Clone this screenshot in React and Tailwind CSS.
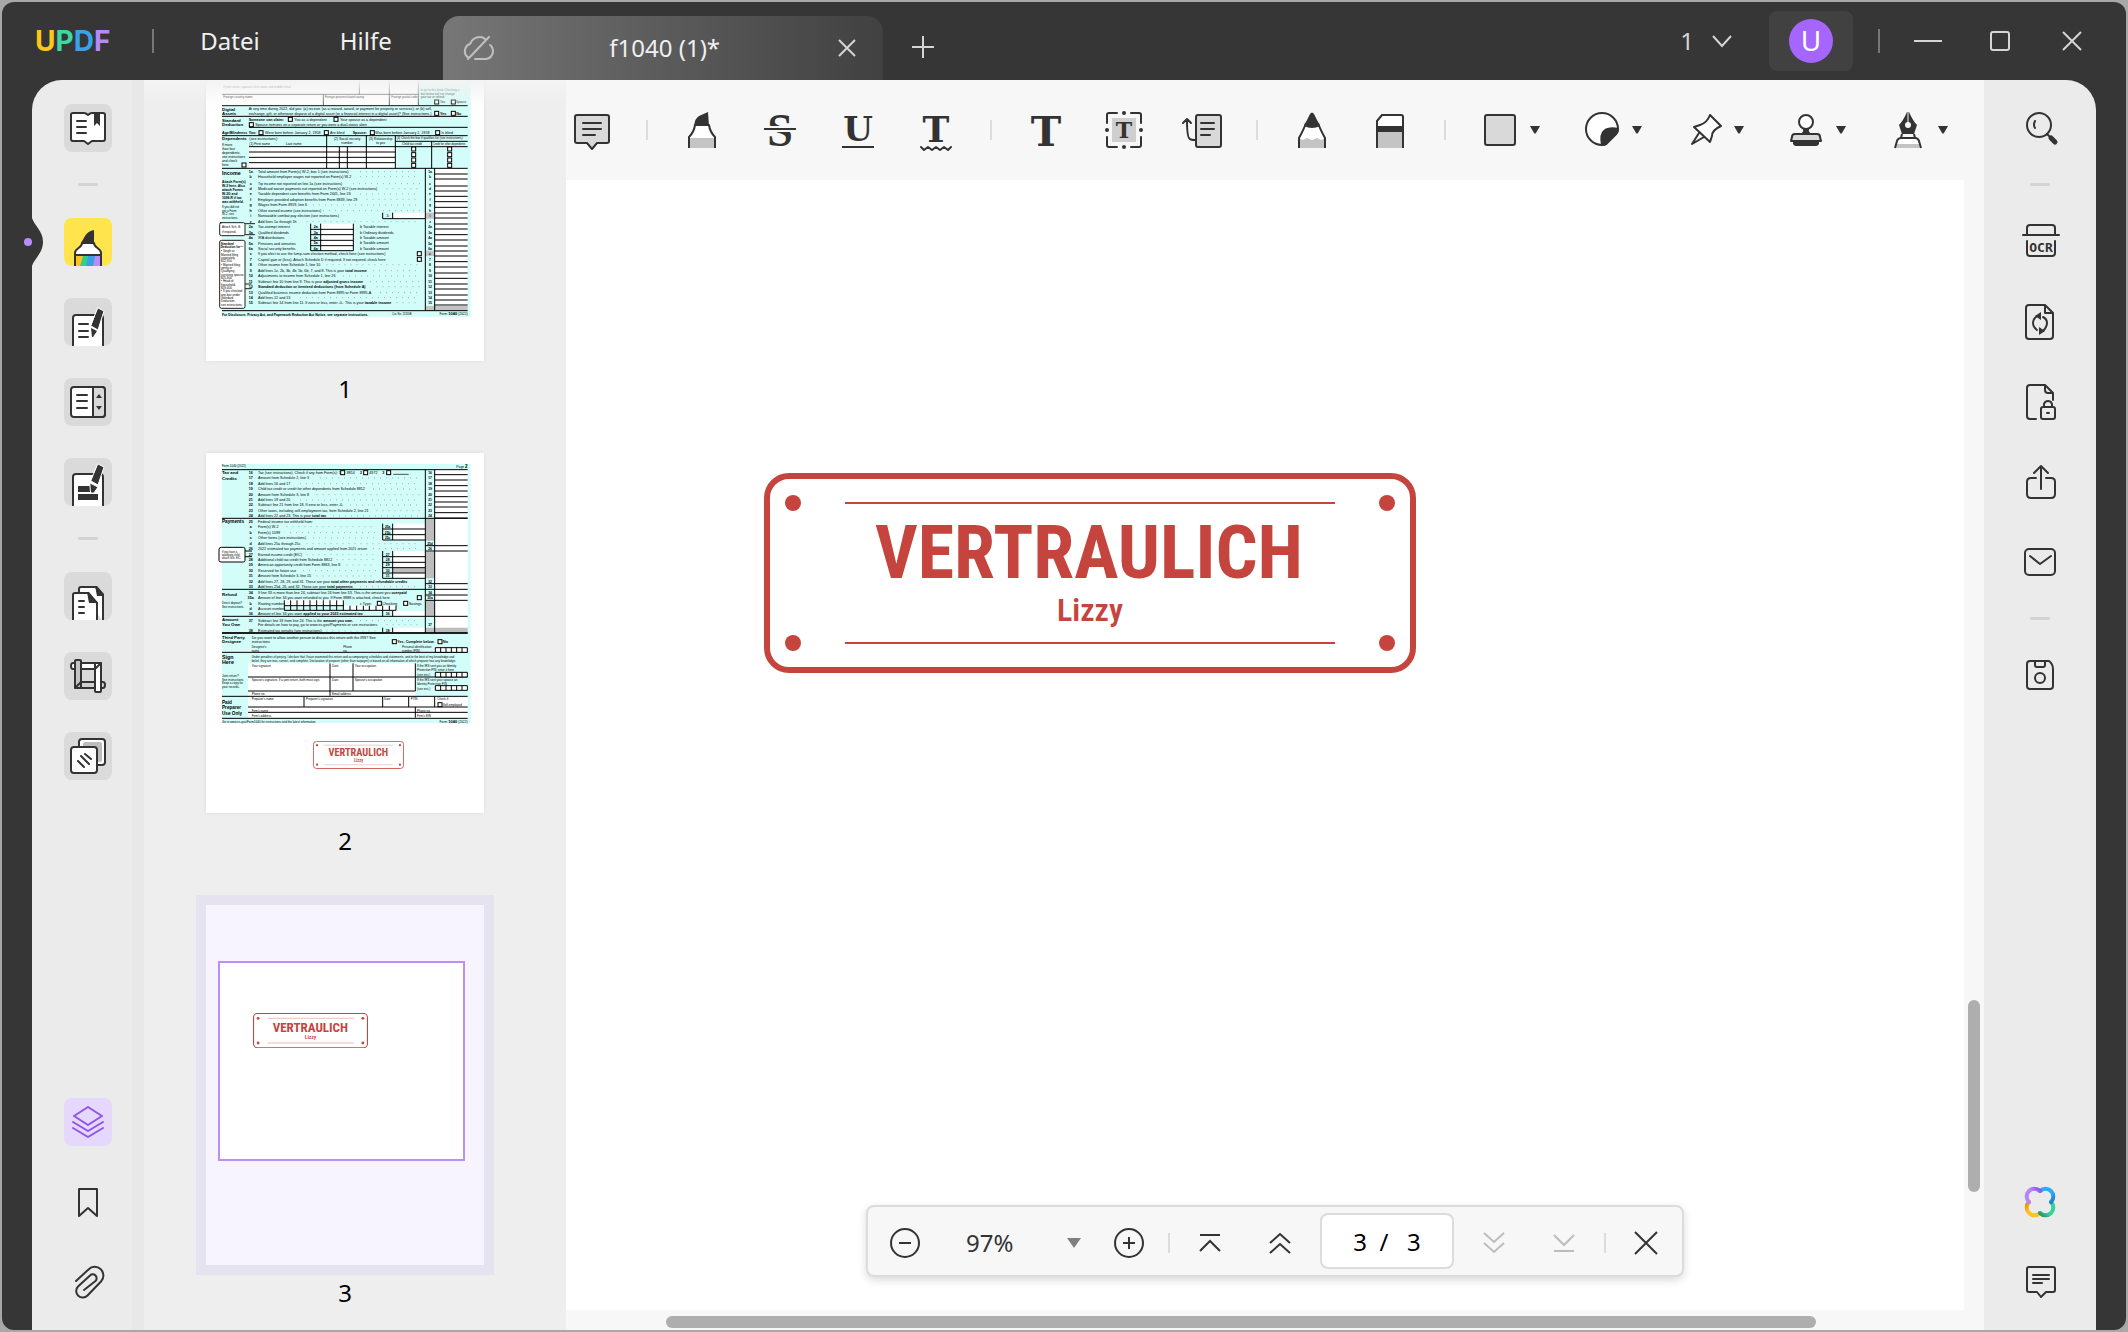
import React from "react";

const K = "#333333";
const RED = "#c5453e";

function Icon({ size = 48, children, stroke = K, width = 2, className = "" }) {
  return (
    <svg
      width={size}
      height={size}
      viewBox={`0 0 ${size} ${size}`}
      fill="none"
      stroke={stroke}
      strokeWidth={width}
      strokeLinecap="round"
      strokeLinejoin="round"
      className={`block shrink-0 overflow-visible ${className}`}
      aria-hidden="true"
    >
      {children}
    </svg>
  );
}

/* ---------- left rail icons ---------- */

const BookIcon = () => (
  <Icon>
    <path fill="#fff" d="M9 9H20q2 0 4 2q2-2 4-2H39q2 0 2 2V35q0 2-2 2H28l-4 3-4-3H9q-2 0-2-2V11q0-2 2-2Z" />
    <path d="M13 17h9M13 23h9M13 29h9" />
    <path fill={K} stroke="none" d="M30 9h6v13l-3-3-3 3z" />
  </Icon>
);

const MarkerIcon = () => (
  <Icon>
    <path fill="#fff" strokeLinecap="butt" d="M11 49V35c0-5 7-5 7-10h12c0 5 7 5 7 10v14" />
    <path stroke="none" fill="#ffc21c" d="M12 38h9l-4 10h-5z" />
    <path stroke="none" fill="#2fd08c" d="M19 38h7l-3 10h-7z" />
    <path stroke="none" fill="#3c9fe6" d="M24 38h9l-2 10h-9z" />
    <path stroke="none" fill="#b78cf8" d="M31 38h5v10h-7z" />
    <path d="M11 37h26" />
    <path fill={K} stroke="none" d="M17 25l4-7q3-5 9-6v13z" />
  </Icon>
);

const EditIcon = () => (
  <Icon>
    <path fill="#fff" strokeLinecap="butt" d="M9 49V20q0-3 3-3h24q3 0 3 3v29" />
    <path d="M15 26h9M15 33h9M15 39h9" />
    <path fill={K} stroke="#fff" strokeWidth="1" d="M34 10l6 3-6 19-7-4z" />
    <path fill={K} stroke="none" d="M27 30l6 3-4 6h-1z" />
  </Icon>
);

const SplitIcon = () => (
  <Icon>
    <rect x="7" y="9" width="34" height="30" rx="3" fill="#fff" />
    <path fill="#d9d9d9" d="M29 9h9q3 0 3 3v24q0 3-3 3h-9z" />
    <path d="M13 17h10M13 23h10M13 30h10" />
    <path fill={K} stroke="none" d="M32 20l3-4 3 4zM32 28h6l-3 4z" />
  </Icon>
);

const FormIcon = () => (
  <Icon>
    <path fill="#fff" strokeLinecap="butt" d="M9 49V19q0-3 3-3h24q3 0 3 3v30" />
    <path fill={K} stroke="none" d="M14 28h14v6H14zM14 36h20v6H14z" />
    <path fill={K} stroke="#fff" strokeWidth="1" d="M34 6l6 3-6 18-7-4z" />
    <path fill={K} stroke="#fff" strokeWidth="1" d="M26 25l8 4-4 6h-3z" />
  </Icon>
);

const DocsIcon = () => (
  <Icon>
    <path fill="#fff" strokeLinecap="butt" d="M15 20v-3q0-2 2-2h15l7 8v26" />
    <path fill={K} stroke="none" d="M31 14h2l7 8v2h-7z" />
    <path fill="#fff" strokeLinecap="butt" d="M9 49V23q0-2 2-2h13l9 10v18" />
    <path fill={K} stroke="none" d="M23 20h2l9 11h-9z" />
    <path d="M15 29h5M15 35h5M15 41h5" />
  </Icon>
);

const CropIcon = () => (
  <Icon>
    <path fill="#fff" d="M9 11H37V17H9q-2 0-2-3t2-3z" />
    <path fill="#d0d0d0" d="M11 30H39q2 0 2 3t-2 3H11z" />
    <rect x="11" y="8" width="6" height="28" rx="1" fill="#c4c4c4" />
    <rect x="31" y="11" width="6" height="29" rx="1" fill="#fff" />
    <path d="M17 30l-5 5M31 17l5-5" />
  </Icon>
);

const LayersIcon = () => (
  <Icon>
    <rect x="15" y="7" width="26" height="26" rx="3" fill="#fff" />
    <rect x="19" y="10" width="19" height="20" rx="2" fill="#bdbdbd" stroke="none" />
    <rect x="7" y="15" width="26" height="26" rx="3" fill="#fff" />
    <path d="M21 22l6 5M17 24l8 8M14 29l6 6" />
  </Icon>
);

const StackIcon = () => (
  <Icon stroke="#8f55e6">
    <path d="M24 9L38 18L24 27L10 18Z" />
    <path d="M9 24L24 33L39 24M9 30L24 39L39 30" />
  </Icon>
);

const BookmarkIcon = () => (
  <Icon>
    <path d="M15 11h18v27l-9-8-9 8z" />
  </Icon>
);

const ClipIcon = () => (
  <Icon>
    <path d="M12 23L24.500 11.500A8.500 8.500 0 0 1 37 23.500L23.500 37.500A6.500 6.500 0 0 1 14 28.500L26 17.500A3.800 3.800 0 0 1 31.500 23L20 32" />
  </Icon>
);

/* ---------- right rail icons ---------- */

const SearchIcon = () => (
  <Icon>
    <circle cx="23" cy="21" r="12" />
    <path d="M19 17q-2 4 0 7M31 30l3 3" />
    <path strokeWidth="5" d="M35 34l4 4" />
  </Icon>
);

const OcrIcon = () => (
  <Icon>
    <path d="M11 16V10q0-3 3-3h22q3 0 3 3v6M7 17h36M11 23v12q0 3 3 3h22q3 0 3-3V23" />
    <text x="25" y="34" textAnchor="middle" fontFamily="DejaVu Sans Mono, monospace" fontWeight="700" fontSize="13" fill={K} stroke="none">
      OCR
    </text>
  </Icon>
);

const ConvertIcon = () => (
  <Icon>
    <path d="M13 7H29L37 15V38q0 3-3 3H13q-3 0-3-3V10q0-3 3-3ZM29 7v8h8" />
    <path d="M21 32q-4-3-4-7t4-7M27 19q4 2 4 6t-4 8" />
    <path fill={K} stroke="none" d="M19 18l6-4v8zM29 33l-6-4v8z" />
  </Icon>
);

const LockDocIcon = () => (
  <Icon>
    <path d="M20 41h-6q-3 0-3-3V10q0-3 3-3H29L37 15V22M29 7v5q0 3 3 3h5" />
    <rect x="25" y="29" width="14" height="12" rx="2" />
    <path d="M28 28v-2q1-3 4-3t4 3v2M31 35h2" />
  </Icon>
);

const ShareIcon = () => (
  <Icon>
    <path d="M20 20h-5q-4 0-4 4v12q0 4 4 4h20q4 0 4-4V24q0-4-4-4h-5M25 31V9M18 15l7-7 7 7" />
  </Icon>
);

const MailIcon = () => (
  <Icon>
    <rect x="9" y="11" width="30" height="26" rx="4" />
    <path d="M14 18l10 8 11-8" />
  </Icon>
);

const SaveIcon = () => (
  <Icon>
    <path d="M14 9H33q4 3 4 8V34q0 3-3 3H14q-3 0-3-3V12q0-3 3-3ZM19 9v4q0 2 2 2h6q2 0 2-2V9" />
    <circle cx="24" cy="26" r="5" />
  </Icon>
);

const CloverIcon = () => (
  <Icon width={4}>
    <defs>
      <linearGradient id="cv1" x1="0" y1="1" x2="1" y2="0"><stop offset="0.600" stopColor="#b585fa" /><stop offset="1" stopColor="#8a55d8" /></linearGradient>
      <linearGradient id="cv2" x1="0" y1="0" x2="1" y2="1"><stop offset="0.600" stopColor="#2badf6" /><stop offset="1" stopColor="#1f78c8" /></linearGradient>
      <linearGradient id="cv3" x1="1" y1="0" x2="0" y2="1"><stop offset="0.600" stopColor="#35d396" /><stop offset="1" stopColor="#1f9560" /></linearGradient>
      <linearGradient id="cv4" x1="1" y1="1" x2="0" y2="0"><stop offset="0.600" stopColor="#fdc41c" /><stop offset="1" stopColor="#e08a10" /></linearGradient>
    </defs>
    <path stroke="url(#cv4)" d="M24 35A7.600 7.600 0 1 1 13 24" />
    <path stroke="url(#cv3)" d="M35 24A7.600 7.600 0 1 1 24 35" />
    <path stroke="url(#cv2)" d="M24 13A7.600 7.600 0 1 1 35 24" />
    <path stroke="url(#cv1)" d="M13 24A7.600 7.600 0 1 1 24 13" />
  </Icon>
);

const CommentsIcon = () => (
  <Icon>
    <path d="M13 9H37q2 0 2 2V32q0 2-2 2H30l-5 5-4-5H13q-2 0-2-2V11q0-2 2-2Z" />
    <path d="M17 17h16M17 21h16M17 25h9" />
  </Icon>
);

/* ---------- toolbar icons ---------- */

const serif = { fontFamily: "DejaVu Serif, serif", fontWeight: 700, fill: K, stroke: "none", textAnchor: "middle" };

const NoteIcon = () => (
  <Icon size={40}>
    <path fill="#d9d9d9" d="M5 5H35q2 0 2 2V31q0 2-2 2H25l-5 6-5-6H5q-2 0-2-2V7q0-2 2-2Z" />
    <path d="M11 13h18M11 19h18M11 25h12" />
  </Icon>
);

const HighlightIcon = () => (
  <Icon size={40}>
    <path fill="#fff" stroke="none" d="M13 16h14q1 7 6 11v11H7V27q5-4 6-11z" />
    <path fill="#c4c4c4" stroke="none" d="M7 28h26v10H7z" />
    <path strokeLinecap="butt" d="M7 38V27q5-5 6-12h14q1 7 6 12v11" />
    <path fill={K} stroke="none" d="M12 16q1-8 5-10l9-4 1 14z" />
  </Icon>
);

const StrikeIcon = () => (
  <Icon size={40}>
    <text {...serif} fontFamily="Liberation Serif, serif" x="20" y="36" fontSize="46">S</text>
    <path stroke="#f7f7f7" strokeWidth="6" strokeLinecap="butt" d="M4 19h32" />
    <path strokeLinecap="butt" d="M4 19h32" />
  </Icon>
);

const UnderlineIcon = () => (
  <Icon size={40}>
    <text {...serif} x="20" y="31" fontSize="34">U</text>
    <path strokeLinecap="butt" d="M4 37h32" />
  </Icon>
);

const SquiggleIcon = () => (
  <Icon size={40}>
    <text {...serif} x="20" y="32" fontSize="36">T</text>
    <path d="M5 37l3 3 4-3 4 3 4-3 4 3 4-3 4 3 3-3" />
  </Icon>
);

const TextIcon = () => (
  <Icon size={40}>
    <text {...serif} x="20" y="36" fontSize="41">T</text>
  </Icon>
);

const TextBoxIcon = () => (
  <Icon size={40}>
    <path d="M13 3H5q-2 0-2 2v8M27 3h8q2 0 2 2v8M13 37H5q-2 0-2-2v-8M27 37h8q2 0 2-2v-8" />
    <path fill="#cfcfcf" stroke="none" d="M8 8h24v24H8z" />
    <g fill={K} stroke="none">
      <circle cx="20" cy="3" r="2" /><circle cx="20" cy="37" r="2" /><circle cx="3" cy="20" r="2" /><circle cx="37" cy="20" r="2" />
    </g>
    <text {...serif} x="20" y="28" fontSize="22">T</text>
  </Icon>
);

const CalloutIcon = () => (
  <Icon size={40}>
    <rect x="14" y="5" width="25" height="32" rx="2" fill="#d9d9d9" />
    <path d="M19 13h13M19 19h13M19 25h9M1 13l4-4 4 4M5 10q0 18 3 19 1 1 5 1" />
  </Icon>
);

const PencilIcon = () => (
  <Icon size={40}>
    <path fill="#fff" stroke="none" d="M13 16h14l6 12v6H7v-6z" />
    <path fill="#c4c4c4" stroke="none" d="M7 28l4 2 4-2 5 2 5-2 4 2 4-2v10H7z" />
    <path strokeLinecap="butt" d="M7 38V28q5-9 7-15M33 38V28q-5-9-7-15" />
    <path fill={K} stroke="none" d="M12 16l6-12q2-3 4 0l6 12q-8 4-16 0z" />
  </Icon>
);

const EraserIcon = () => (
  <Icon size={40}>
    <path fill="#fff" strokeLinecap="butt" d="M7 38V11l5-6h19q2 0 2 2v31" />
    <path fill="#c4c4c4" stroke="none" d="M8 22h24v16H8z" />
    <path fill={K} stroke="none" d="M7 16h26v6H7z" />
  </Icon>
);

const ShapeIcon = () => (
  <Icon size={40}>
    <rect x="5" y="5" width="30" height="30" rx="2" fill="#d9d9d9" />
  </Icon>
);

const StickerIcon = () => (
  <Icon size={40}>
    <path fill="#fff" d="M20 35A16 16 0 1 1 36 19q0 3-2 5L24 34q-2 1-4 1z" />
    <path fill={K} d="M20 35Q18 24 22 21Q27 17 36 19q0 3-2 5L24 34q-2 1-4 1z" />
  </Icon>
);

const PinIcon = () => (
  <Icon size={40}>
    <path fill="#fff" d="M26 5L37 16Q28 20 28 26L26 32L10 17L16 15Q23 13 26 5Z" />
    <path d="M15 23L8 34L20 27" />
  </Icon>
);

const StampIcon = () => (
  <Icon size={40}>
    <circle cx="20" cy="12" r="7" fill="#fff" />
    <path fill={K} d="M17 19h6q-1 2 2 5h-10q3-3 2-5z" stroke="none" />
    <path fill="#d9d9d9" d="M9 24h22q3 0 3 3l1 4H5l1-4q0-3 3-3z" />
    <path fill={K} stroke="none" d="M7 31h26v3q-1 2-3 2H10q-2 0-3-2z" />
  </Icon>
);

const PenIcon = () => (
  <Icon size={40}>
    <path fill={K} stroke="none" d="M19 2h2q4 9 8 13-2 6-3 9H14q-1-3-3-9 4-4 8-13z" />
    <path stroke="#f7f7f7" strokeLinecap="butt" strokeWidth="1" d="M20 2v12" />
    <circle cx="20" cy="15" r="3" fill="#f7f7f7" stroke="none" />
    <path fill="#c4c4c4" stroke="none" d="M8 34h24l1 4H7z" />
    <path fill="#fff" stroke="none" d="M12 28h16l3 6H9z" />
    <path strokeLinecap="butt" d="M14 24l-1 4h14l-1-4M13 28q-3 0-4 3l-2 7M27 28q3 0 4 3l2 7" />
  </Icon>
);

const Caret = ({ className = "text-[#333333]" }) => (
  <svg width="10" height="8" viewBox="0 0 10 8" className={className} aria-hidden="true">
    <path d="M0 0h10L6 7q-1 1-2 0z" fill="currentColor" />
  </svg>
);

/* ---------- rubber stamp ---------- */

function Stamp({ className = "" }) {
  return (
    <svg viewBox="0 0 652 200" className={`block ${className}`} role="img" aria-label="Stempel Vertraulich">
      <rect x="3" y="3" width="646" height="194" rx="22" fill="none" stroke={RED} strokeWidth="6" />
      <path d="M81 30H571M81 170H571" stroke={RED} strokeWidth="2" />
      {[[29, 30], [623, 30], [29, 170], [623, 170]].map(([x, y]) => (
        <circle key={`${x}-${y}`} cx={x} cy={y} r="8" fill={RED} />
      ))}
      <g fill={RED} textAnchor="middle" fontFamily="Roboto Condensed, Liberation Sans Narrow, Roboto, sans-serif">
        <text x="325" y="105" fontWeight="700" fontSize="74">VERTRAULICH</text>
        <text x="326" y="148" fontWeight="600" fontSize="32">Lizzy</text>
      </g>
    </svg>
  );
}

/* ---------- tax form thumbnails ---------- */

const CYAN = "#d2fdf9";

function T({ x, y, s = 11, b, a, children }) {
  return (
    <text x={x} y={y + 4} fontSize={s} fontWeight={b ? 700 : 400} textAnchor={a}>
      {children}
    </text>
  );
}

function Box({ x, y }) {
  return <rect x={x} y={y - 6} width="12" height="12" fill="#fff" stroke="#000" strokeWidth="3" />;
}

const incomeRows = [
  [275, "1a", "Total amount from Form(s) W-2, box 1 (see instructions)"],
  [290, "b", "Household employee wages not reported on Form(s) W-2"],
  [311, "c", "Tip income not reported on line 1a (see instructions)"],
  [326, "d", "Medicaid waiver payments not reported on Form(s) W-2 (see instructions)"],
  [342, "e", "Taxable dependent care benefits from Form 2441, line 26"],
  [358, "f", "Employer-provided adoption benefits from Form 8839, line 29"],
  [375, "g", "Wages from Form 8919, line 6"],
  [392, "h", "Other earned income (see instructions)"],
  [407, "i", "Nontaxable combat pay election (see instructions)"],
  [425, "z", "Add lines 1a through 1h"],
  [440, "2a", "Tax-exempt interest"],
  [457, "3a", "Qualified dividends"],
  [473, "4a", "IRA distributions"],
  [491, "5a", "Pensions and annuities"],
  [506, "6a", "Social security benefits"],
  [521, "c", "If you elect to use the lump-sum election method, check here (see instructions)"],
  [538, "7", "Capital gain or (loss). Attach Schedule D if required. If not required, check here"],
  [554, "8", "Other income from Schedule 1, line 10"],
  [572, "9", "Add lines 1z, 2b, 3b, 4b, 5b, 6b, 7, and 8. This is your ", "total income"],
  [588, "10", "Adjustments to income from Schedule 1, line 26"],
  [605, "11", "Subtract line 10 from line 9. This is your ", "adjusted gross income"],
  [620, "12", "", "Standard deduction or itemized deductions (from Schedule A)"],
  [638, "13", "Qualified business income deduction from Form 8995 or Form 8995-A"],
  [653, "14", "Add lines 12 and 13"],
  [668, "15", "Subtract line 14 from line 11. If zero or less, enter -0-. This is your ", "taxable income"],
];

const PageOne = () => (
  <svg viewBox="18 -237 834 1080" className="block size-full" fontFamily="Liberation Sans, sans-serif" fill="#000" aria-hidden="true">
    <path fill={CYAN} d="M66 77H655V0H812V710H66z" />
    <path fill="#fff" d="M147 200H586V265H147zM704 266H803V692H704zM578 398H676V416H578zM362 431H460V512H362z" />
    <path fill="#c4c4c4" d="M676 398H704V416H676zM676 512H704V528H676zM676 678H803V692H676z" />
    <g stroke="#000" strokeWidth="3" fill="none">
      <path strokeWidth="2" d="M66 43H655M370 43V77M568 0V77M655 0V77M478 0V43" />
      <path d="M66 77H803M66 109H803M147 142H803M66 167H803M66 265H803M147 200H803M147 216H586M147 232H586M147 248H586M380 167V265M418 200V265M442 200V265M499 167V265M586 167V265M695 184V265M586 184H803" />
      <path d="M676 265V692M704 265V692M66 692H803M548 398V416H676M332 431V512H460V431M362 431V512M332 448H460M332 464H460M332 481H460M332 497H460M578 398V416" />
      {incomeRows.map(([y]) => <path key={y} d={`M704 ${y + 7}H803`} />)}
    </g>
    <path
      stroke="#555"
      strokeWidth="2"
      strokeDasharray="2 16"
      d="M480 275H660M480 290H660M460 311H660M560 326H660M480 342H660M500 358H660M340 375H660M370 392H660M320 425H660M380 554H660M520 572H660M430 588H660M510 605H660M530 620H660M540 638H660M300 653H660M590 668H660"
    />
    <g fill="none" stroke="#222" strokeWidth="3">
      <path fill="#fff" d="M60 428H130q5 0 5 5V462q0 5-5 5H65q-6 0-6-5V433q0-5 6-5z" />
      <path fill="#fff" d="M65 481H130q5 0 5 5V680q0 5-5 5H65q-6 0-6-5V486q0-5 6-5z" />
      <path d="M135 431H165M135 464H165M135 612H155M135 626H155" />
    </g>
    <T x={70} y={20} s={9}>If joint return, spouse's first name and middle initial</T>
    <T x={70} y={51} s={9}>Foreign country name</T>
    <T x={374} y={51} s={9}>Foreign province/state/county</T>
    <T x={574} y={51} s={9}>Foreign postal code</T>
    <T x={662} y={28} s={9}>to go to this fund. Checking a</T>
    <T x={662} y={40} s={9}>box below will not change</T>
    <T x={662} y={51} s={9}>your tax or refund.</T>
    <Box x={704} y={66} /><T x={720} y={66} s={9}>You</T>
    <Box x={754} y={66} /><T x={768} y={66} s={9}>Spouse</T>
    <T x={66} y={88} s={13} b>Digital</T><T x={66} y={100} s={13} b>Assets</T>
    <T x={146} y={87}>At any time during 2022, did you: (a) receive (as a reward, award, or payment for property or services); or (b) sell,</T>
    <T x={146} y={101}>exchange, gift, or otherwise dispose of a digital asset (or a financial interest in a digital asset)? (See instructions.)</T>
    <Box x={704} y={100} /><T x={720} y={100} b>Yes</T><Box x={754} y={100} /><T x={769} y={100} b>No</T>
    <T x={66} y={121} s={13} b>Standard</T><T x={66} y={134} s={13} b>Deduction</T>
    <T x={146} y={118} b>Someone can claim:</T><Box x={265} y={118} /><T x={283} y={118}>You as a dependent</T>
    <Box x={402} y={118} /><T x={420} y={118}>Your spouse as a dependent</T>
    <Box x={148} y={134} /><T x={166} y={134}>Spouse itemizes on a separate return or you were a dual-status alien</T>
    <T x={66} y={158} s={11} b>Age/Blindness</T><T x={146} y={158} b>You:</T>
    <Box x={177} y={158} /><T x={195} y={158}>Were born before January 2, 1958</T>
    <Box x={373} y={158} /><T x={390} y={158}>Are blind</T><T x={458} y={158} b>Spouse:</T>
    <Box x={511} y={158} /><T x={526} y={158}>Was born before January 2, 1958</T><Box x={707} y={158} /><T x={724} y={158}>Is blind</T>
    <T x={66} y={176} s={13} b>Dependents</T><T x={148} y={176}>(see instructions):</T>
    <T x={148} y={191} s={10}>(1) First name</T><T x={258} y={191} s={10}>Last name</T>
    <T x={402} y={177} s={10}>(2) Social security</T><T x={424} y={189} s={10}>number</T>
    <T x={507} y={177} s={10}>(3) Relationship</T><T x={528} y={189} s={10}>to you</T>
    <T x={590} y={174} s={9}>(4) Check the box if qualifies for (see instructions):</T>
    <T x={606} y={192} s={9}>Child tax credit</T><T x={699} y={192} s={8}>Credit for other dependents</T>
    {[207, 224, 240, 256].map((y) => <React.Fragment key={y}><Box x={635} y={y} /><Box x={743} y={y} /></React.Fragment>)}
    {["If more", "than four", "dependents,", "see instructions", "and check", "here"].map((t, i) => <T key={t} x={66} y={195 + i * 12} s={10}>{t}</T>)}
    <Box x={126} y={255} />
    <T x={66} y={280} s={16} b>Income</T>
    {["Attach Form(s)", "W-2 here. Also", "attach Forms", "W-2G and", "1099-R if tax", "was withheld."].map((t, i) => <T key={t} x={66} y={304 + i * 12} s={10} b>{t}</T>)}
    {["If you did not", "get a Form", "W-2, see", "instructions."].map((t, i) => <T key={t} x={66} y={380 + i * 11} s={9}>{t}</T>)}
    <T x={66} y={440} s={9}>Attach Sch. B</T><T x={66} y={455} s={9}>if required.</T>
    <T x={62} y={492} s={9} b>Standard</T><T x={62} y={501} s={9} b>Deduction for—</T>
    {["• Single or", "Married filing", "separately,", "$12,950", "• Married filing", "jointly or", "Qualifying", "surviving spouse,", "$25,900", "• Head of", "household,", "$19,400", "• If you checked", "any box under", "Standard", "Deduction,", "see instructions."].map((t, i) => <T key={t} x={63} y={513 + i * 10} s={9}>{t}</T>)}
    {incomeRows.map(([y, n, t, bold]) => (
      <React.Fragment key={y}>
        <T x={152} y={y} b a="middle">{n}</T>
        <T x={174} y={y}>{t}{bold && <tspan fontWeight="700">{bold}</tspan>}</T>
        <T x={690} y={y} s={10} b a="middle">{n}</T>
      </React.Fragment>
    ))}
    {["2a", "3a", "4a", "5a", "6a"].map((n, i) => (
      <React.Fragment key={n}>
        <T x={347} y={441 + i * 16} b a="middle">{n}</T>
        <T x={480} y={441 + i * 16}>{i === 0 ? "b  Taxable interest" : i === 1 ? "b  Ordinary dividends" : "b  Taxable amount"}</T>
      </React.Fragment>
    ))}
    <T x={563} y={407} a="middle">1i</T>
    <Box x={652} y={521} /><Box x={652} y={538} />
    <T x={66} y={704} s={10} b>For Disclosure, Privacy Act, and Paperwork Reduction Act Notice, see separate instructions.</T>
    <T x={576} y={702} s={8}>Cat. No. 11320B</T>
    <T x={803} y={702} s={10} a="end">Form <tspan fontWeight="700" fontSize="12">1040</tspan> (2022)</T>
  </svg>
);

const creditRows = [
  [101, "16", "Tax (see instructions). Check if any from Form(s):  1"],
  [117, "17", "Amount from Schedule 2, line 3"],
  [134, "18", "Add lines 16 and 17"],
  [150, "19", "Child tax credit or credit for other dependents from Schedule 8812"],
  [167, "20", "Amount from Schedule 3, line 8"],
  [183, "21", "Add lines 19 and 20"],
  [198, "22", "Subtract line 21 from line 18. If zero or less, enter -0-"],
  [215, "23", "Other taxes, including self-employment tax, from Schedule 2, line 21"],
  [231, "24", "Add lines 22 and 23. This is your ", "total tax"],
];
const paymentRows = [
  [248, "25", "Federal income tax withheld from:"],
  [263, "a", "Form(s) W-2"],
  [281, "b", "Form(s) 1099"],
  [297, "c", "Other forms (see instructions)"],
  [314, "d", "Add lines 25a through 25c"],
  [329, "26", "2022 estimated tax payments and amount applied from 2021 return"],
  [347, "27", "Earned income credit (EIC)"],
  [362, "28", "Additional child tax credit from Schedule 8812"],
  [378, "29", "American opportunity credit from Form 8863, line 8"],
  [395, "30", "Reserved for future use"],
  [411, "31", "Amount from Schedule 3, line 15"],
  [428, "32", "Add lines 27, 28, 29, and 31. These are your ", "total other payments and refundable credits"],
  [443, "33", "Add lines 25d, 26, and 32. These are your ", "total payments"],
  [461, "34", "If line 33 is more than line 24, subtract line 24 from line 33. This is the amount you ", "overpaid"],
  [476, "35a", "Amount of line 34 you want refunded to you. If Form 8888 is attached, check here"],
  [494, "b", "Routing number"],
  [509, "d", "Account number"],
  [524, "36", "Amount of line 34 you want ", "applied to your 2023 estimated tax"],
  [545, "37", "Subtract line 33 from line 24. This is the ", "amount you owe."],
  [557, "", "For details on how to pay, go to www.irs.gov/Payments or see instructions"],
  [576, "38", "Estimated tax penalty (see instructions)"],
];

const PageTwo = () => (
  <svg viewBox="18 42 834 1080" className="block size-full" fontFamily="Liberation Sans, sans-serif" fill="#000" aria-hidden="true">
    <path fill={CYAN} d="M66 75H812V852H66z" />
    <path fill="#fff" d="M704 92H803V580H704zM578 254H676V303H578zM578 336H676V418H578zM578 516H676V532H578zM578 566H676V580H578zM144 673H646V770H144zM144 774H803V836H144zM253 484H432V514H588V500H253zM704 625H803V640H704z" />
    <path fill="#bdbdbd" d="M676 238H704V305H676zM676 338H704V418H676zM578 386H676V402H578zM676 484H704V532H676zM676 566H803V580H676z" />
    <g stroke="#000" strokeWidth="3" fill="none">
      <path d="M66 92H803M66 238H803M66 451H803M66 532H803M66 582H803M66 640H803M66 772H803M66 838H803M676 92V582M704 92V582" />
      <path strokeWidth="5" d="M66 582H803" />
      <path d="M548 254V303H676M578 254V303M548 270H676M548 287H676M548 336V418H676M578 336V418M548 353H676M548 370H676M548 386H676M548 402H676M548 516V532M578 516V532M548 566V580M578 566V580" />
      <path d="M144 714H803M144 756H646M390 673V770M459 673V756M646 673V756M144 804H803M144 820H803M312 774V804M548 774V804M626 774V804M704 774V804M646 804V836" />
      <path d="M253 484V514H588V500M272 484V514M291 484V514M311 484V514M330 484V514M350 484V514M370 484V514M390 484V514M410 484V514M430 484V514M253 500H432M450 500V514M470 500V514M490 500V514M508 500V514M528 500V514M548 500V514M568 500V514" />
      {[626, 700, 740].map((y) => <path key={y} fill="#fff" d={`M706 ${y}H802V${y + 14}H706zM722 ${y}v14M738 ${y}v14M754 ${y}v14M770 ${y}v14M786 ${y}v14`} />)}
      {creditRows.map(([y]) => <path key={y} d={`M704 ${y + 6}H803`} />)}
      {[320, 336, 434, 468, 484].map((y) => <path key={y} d={`M676 ${y}H803`} />)}
      <path fill="#fff" d="M64 325H130q5 0 5 5V364q0 5-5 5H63q-6 0-6-5V331q0-6 7-6zM135 336H156M135 353H156" />
    </g>
    <path
      stroke="#555"
      strokeWidth="2"
      strokeDasharray="2 16"
      d="M360 117H660M300 134H660M520 150H660M350 167H660M300 183H660M450 198H660M530 215H660M400 231H660M260 263H530M270 281H530M340 297H530M320 314H660M520 329H660M320 347H530M410 362H530M440 378H530M310 395H530M350 411H530M480 443H660M480 545H660M560 557H660M380 576H530"
    />
    <T x={66} y={80} s={9}>Form 1040 (2022)</T><T x={803} y={83} s={10} a="end">Page <tspan fontWeight="700" fontSize="14">2</tspan></T>
    <T x={66} y={101} s={13} b>Tax and</T><T x={66} y={119} s={13} b>Credits</T>
    <T x={66} y={248} s={14} b>Payments</T>
    <T x={66} y={467} s={13} b>Refund</T><T x={66} y={492} s={9}>Direct deposit?</T><T x={66} y={504} s={9}>See instructions.</T>
    <T x={66} y={542} s={13} b>Amount</T><T x={66} y={557} s={13} b>You Owe</T>
    <T x={66} y={596} s={13} b>Third Party</T><T x={66} y={608} s={13} b>Designee</T>
    <T x={66} y={655} s={16} b>Sign</T><T x={66} y={672} s={16} b>Here</T>
    {["Joint return?", "See instructions.", "Keep a copy for", "your records."].map((t, i) => <T key={t} x={66} y={710 + i * 11} s={9}>{t}</T>)}
    <T x={66} y={790} s={14} b>Paid</T><T x={66} y={806} s={14} b>Preparer</T><T x={66} y={823} s={14} b>Use Only</T>
    <T x={66} y={337} s={8}>If you have a</T><T x={66} y={347} s={8}>qualifying child,</T><T x={66} y={357} s={8}>attach Sch. EIC.</T>
    {[...creditRows, ...paymentRows].map(([y, n, t, bold]) => (
      <React.Fragment key={y}>
        <T x={152} y={y} b a="middle">{n}</T>
        <T x={174} y={y}>{t}{bold && <tspan fontWeight="700">{bold}</tspan>}</T>
      </React.Fragment>
    ))}
    {creditRows.map(([y, n]) => <T key={n} x={690} y={y} s={10} b a="middle">{n}</T>)}
    {[[314, "25d"], [329, "26"], [428, "32"], [443, "33"], [461, "34"], [476, "35a"], [557, "37"]].map(([y, n]) => <T key={n} x={690} y={y} s={10} b a="middle">{n}</T>)}
    {[[263, "25a"], [281, "25b"], [297, "25c"], [347, "27"], [362, "28"], [378, "29"], [395, "30"], [411, "31"], [524, "36"], [575, "38"]].map(([y, n]) => <T key={n} x={563} y={y} s={10} b a="middle">{n}</T>)}
    <Box x={422} y={101} /><T x={440} y={101}>8814</T><T x={480} y={101} b>2</T><Box x={491} y={101} /><T x={508} y={101}>4972</T><T x={547} y={101} b>3</T><Box x={560} y={101} />
    <path d="M580 106H626" stroke="#000" strokeWidth="2" />
    <Box x={652} y={476} /><T x={480} y={494}>c Type:</T><Box x={532} y={493} /><T x={546} y={494}>Checking</T><Box x={611} y={493} /><T x={626} y={494}>Savings</T>
    <T x={155} y={597}>Do you want to allow another person to discuss this return with the IRS? See</T><T x={155} y={608}>instructions</T>
    <Box x={577} y={608} /><T x={592} y={608} b>Yes. Complete below.</T><Box x={714} y={608} /><T x={729} y={608} b>No</T>
    <T x={155} y={623} s={9}>Designee's</T><T x={155} y={635} s={9}>name</T><T x={430} y={623} s={9}>Phone</T><T x={430} y={635} s={9}>no.</T>
    <T x={606} y={623} s={9}>Personal identification</T><T x={606} y={635} s={9}>number (PIN)</T>
    <T x={155} y={654} s={9}>Under penalties of perjury, I declare that I have examined this return and accompanying schedules and statements, and to the best of my knowledge and</T>
    <T x={155} y={664} s={9}>belief, they are true, correct, and complete. Declaration of preparer (other than taxpayer) is based on all information of which preparer has any knowledge.</T>
    <T x={155} y={681} s={9}>Your signature</T><T x={396} y={681} s={9}>Date</T><T x={464} y={681} s={9}>Your occupation</T>
    <T x={651} y={681} s={9}>If the IRS sent you an Identity</T><T x={651} y={693} s={9}>Protection PIN, enter it here</T><T x={651} y={706} s={9}>(see inst.)</T>
    <T x={155} y={722} s={9}>Spouse's signature. If a joint return, both must sign.</T><T x={396} y={722} s={9}>Date</T><T x={464} y={722} s={9}>Spouse's occupation</T>
    <T x={651} y={722} s={9}>If the IRS sent your spouse an</T><T x={651} y={734} s={9}>Identity Protection PIN</T><T x={651} y={748} s={9}>(see inst.)</T>
    <T x={155} y={764} s={9}>Phone no.</T><T x={396} y={764} s={9}>Email address</T>
    <T x={155} y={780} s={9}>Preparer's name</T><T x={318} y={780} s={9}>Preparer's signature</T><T x={552} y={780} s={9}>Date</T><T x={632} y={780} s={9}>PTIN</T><T x={712} y={780} s={9}>Check if:</T>
    <Box x={714} y={797} /><T x={728} y={797} s={9}>Self-employed</T>
    <T x={155} y={815} s={9}>Firm's name</T><T x={651} y={815} s={9}>Phone no.</T><T x={155} y={830} s={9}>Firm's address</T><T x={651} y={830} s={9}>Firm's EIN</T>
    <T x={66} y={848} s={9}>Go to www.irs.gov/Form1040 for instructions and the latest information.</T>
    <T x={803} y={847} s={10} a="end">Form <tspan fontWeight="700" fontSize="12">1040</tspan> (2022)</T>
  </svg>
);

/* ---------- layout pieces ---------- */

const leftTools = [
  ["Kommentar", MarkerIcon, "bg-[#ffe44d]"],
  ["PDF bearbeiten", EditIcon, "bg-[#dadada]"],
  ["Seitenansicht", SplitIcon, "bg-[#dadada]"],
  ["Formular", FormIcon, "bg-[#dadada]"],
];
const pageTools = [
  ["Seiten organisieren", DocsIcon],
  ["Seiten zuschneiden", CropIcon],
  ["Wasserzeichen", LayersIcon],
];

function RailButton({ label, icon: I, className = "" }) {
  return (
    <button type="button" aria-label={label} className={`size-12 overflow-hidden rounded-lg ${className}`}>
      <I />
    </button>
  );
}

const RailDivider = () => <hr className="mb-8 mt-[31px] h-[3px] w-5 rounded border-0 bg-[#d3d3d3]" />;

function LeftRail() {
  return (
    <nav className="relative flex w-28 shrink-0 flex-col items-center rounded-tl-[30px] bg-[#ebebeb] pb-6 pt-6 shadow-[inset_-12px_0_0_#e8e8e8]">
      <svg className="absolute -left-2 top-[138px]" width="20" height="48" viewBox="0 0 20 48" aria-hidden="true">
        <path d="M8 0C10 7 19 13 19 24C19 35 10 41 8 48Z" fill="#363636" />
        <circle cx="4" cy="24" r="4" fill="#b98cf8" />
      </svg>
      <RailButton label="Lesemodus" icon={BookIcon} className="bg-[#dadada]" />
      <RailDivider />
      <div className="flex flex-col gap-8">
        {leftTools.map(([label, I, bg]) => <RailButton key={label} label={label} icon={I} className={bg} />)}
      </div>
      <RailDivider />
      <div className="flex flex-col gap-8">
        {pageTools.map(([label, I]) => <RailButton key={label} label={label} icon={I} className="bg-[#dadada]" />)}
      </div>
      <div className="mt-auto flex flex-col gap-8">
        <RailButton label="Miniaturansichten" icon={StackIcon} className="bg-[#e5d8fc]" />
        <RailButton label="Lesezeichen" icon={BookmarkIcon} />
        <RailButton label="Anhang" icon={ClipIcon} />
      </div>
    </nav>
  );
}

function RightRail() {
  return (
    <nav className="flex w-28 shrink-0 flex-col items-center rounded-tr-[30px] bg-[#ebebeb] pb-6 pt-6">
      <RailButton label="Suchen" icon={SearchIcon} />
      <RailDivider />
      <div className="flex flex-col gap-8">
        <RailButton label="Texterkennung" icon={OcrIcon} />
        <RailButton label="Konvertieren" icon={ConvertIcon} />
        <RailButton label="Schützen" icon={LockDocIcon} />
        <RailButton label="Teilen" icon={ShareIcon} />
        <RailButton label="E-Mail" icon={MailIcon} />
      </div>
      <RailDivider />
      <RailButton label="Speichern" icon={SaveIcon} />
      <div className="mt-auto flex flex-col gap-8">
        <RailButton label="UPDF AI" icon={CloverIcon} />
        <RailButton label="Kommentare" icon={CommentsIcon} />
      </div>
    </nav>
  );
}

function Thumb({ n, selected, children }) {
  return (
    <li className="flex h-[452px] w-[278px] shrink-0 flex-col items-center">
      <button
        type="button"
        aria-label={`Seite ${n}`}
        className={
          selected
            ? "relative h-[360px] w-full bg-[#f7f4ff] outline-[10px] outline-[#e6e3f1]"
            : "relative h-[360px] w-full bg-white shadow-[0_0_4px_#00000014]"
        }
      >
        {children}
      </button>
      <span className="mt-3 text-2xl leading-8 text-black">{n}</span>
    </li>
  );
}

function Thumbnails() {
  return (
    <aside className="relative w-[422px] shrink-0 overflow-hidden bg-[#eeeeee]">
      <ol className="-mt-[79px] ml-[62px] flex flex-col">
        <Thumb n={1}><PageOne /></Thumb>
        <Thumb n={2}>
          <PageTwo />
          <Stamp className="absolute left-[107px] top-[288px] w-[91px]" />
        </Thumb>
        <Thumb n={3} selected>
          <div className="absolute left-3 top-14 h-[200px] w-[247px] border-2 border-[#ba90f6] bg-white">
            <Stamp className="ml-[33px] mt-[50px] w-[115px]" />
          </div>
        </Thumb>
      </ol>
      <div className="absolute inset-x-0 top-0 h-7 bg-gradient-to-b from-[#f3f3f3] to-transparent" />
    </aside>
  );
}

function ToolButton({ label, icon: I, menu }) {
  return (
    <button type="button" aria-label={label} className="flex shrink-0 items-center gap-[10px]">
      <I />
      {menu && <Caret />}
    </button>
  );
}

const ToolDivider = () => <span className="h-5 w-0.5 shrink-0 bg-[#dcdcdc]" />;

function Toolbar() {
  return (
    <div role="toolbar" aria-label="Kommentarwerkzeuge" className="flex h-[100px] shrink-0 items-center gap-[34px] bg-[#f7f7f7] pl-[6px]">
      <ToolButton label="Notiz" icon={NoteIcon} />
      <ToolDivider />
      <div className="flex gap-[38px]">
        <ToolButton label="Hervorheben" icon={HighlightIcon} />
        <ToolButton label="Durchstreichen" icon={StrikeIcon} />
        <ToolButton label="Unterstreichen" icon={UnderlineIcon} />
        <ToolButton label="Wellenlinie" icon={SquiggleIcon} />
      </div>
      <ToolDivider />
      <div className="flex gap-[38px]">
        <ToolButton label="Text" icon={TextIcon} />
        <ToolButton label="Textfeld" icon={TextBoxIcon} />
        <ToolButton label="Textlegende" icon={CalloutIcon} />
      </div>
      <ToolDivider />
      <div className="flex gap-[38px]">
        <ToolButton label="Bleistift" icon={PencilIcon} />
        <ToolButton label="Radierer" icon={EraserIcon} />
      </div>
      <ToolDivider />
      <div className="flex gap-[42px]">
        <ToolButton label="Formen" icon={ShapeIcon} menu />
        <ToolButton label="Sticker" icon={StickerIcon} menu />
        <ToolButton label="Haftmarke" icon={PinIcon} menu />
        <ToolButton label="Stempel" icon={StampIcon} menu />
        <ToolButton label="Signatur" icon={PenIcon} menu />
      </div>
    </div>
  );
}

function NavIcon({ d, className = "text-[#333333]", label }) {
  return (
    <button type="button" aria-label={label} className={`block ${className}`}>
      <svg width="24" height="24" viewBox="0 0 24 24" fill="none" stroke="currentColor" strokeWidth="2" className="block" aria-hidden="true">
        <path d={d} />
      </svg>
    </button>
  );
}

function ZoomCircle({ label, d, className = "" }) {
  return (
    <button type="button" aria-label={label} className={`block ${className}`}>
      <svg width="32" height="32" viewBox="0 0 32 32" fill="none" stroke={K} strokeWidth="2" className="block" aria-hidden="true">
        <circle cx="16" cy="16" r="14" />
        <path d={d} />
      </svg>
    </button>
  );
}

function PageBar() {
  return (
    <div className="absolute bottom-[33px] left-1/2 flex h-[72px] w-[818px] -translate-x-1/2 items-center rounded-lg border-2 border-[#dcdcdc] bg-[#f7f7f7] pl-[21px] pt-1 text-2xl text-[#333333] shadow-[0_3px_8px_#00000026]">
      <ZoomCircle label="Verkleinern" d="M10 16h12" />
      <div className="ml-[45px] flex w-[115px] items-center justify-between">
        <span>97%</span>
        <svg width="14" height="10" viewBox="0 0 14 10" className="text-[#808080]" aria-hidden="true"><path d="M0 0h14L7 10z" fill="currentColor" /></svg>
      </div>
      <ZoomCircle label="Vergrößern" d="M10 16h12M16 10v12" className="ml-8" />
      <span className="ml-[23px] h-5 w-0.5 bg-[#dcdcdc]" />
      <div className="ml-7 flex gap-[46px]">
        <NavIcon label="Erste Seite" d="M2 4h20M2 20l10-10 10 10" />
        <NavIcon label="Vorherige Seite" d="M2 12L12 3l10 9M2 22l10-9 10 9" />
      </div>
      <input
        aria-label="Seitenzahl"
        defaultValue="3  /   3"
        className="mb-1 ml-7 h-14 w-[134px] rounded-lg border-2 border-[#dcdcdc] bg-white text-center text-2xl text-black [white-space:pre]"
      />
      <div className="ml-7 flex gap-[46px]">
        <NavIcon label="Nächste Seite" className="text-[#bcbcbc]" d="M2 2l10 9 10-9M2 12l10 9 10-9" />
        <NavIcon label="Letzte Seite" className="text-[#bcbcbc]" d="M2 4l10 10L22 4M2 20h20" />
      </div>
      <span className="ml-7 h-5 w-0.5 bg-[#dcdcdc]" />
      <div className="ml-7"><NavIcon label="Schließen" d="M1 1l22 22M23 1L1 23" /></div>
    </div>
  );
}

function TitleBar() {
  return (
    <header className="flex h-[78px] shrink-0 items-center text-2xl text-[#f0f0f0]">
      <div className="ml-[33px] flex font-['Inter'] text-[28px] font-bold leading-8" aria-label="UPDF">
        <span className="text-[#fcc81a]">U</span>
        <span className="text-[#3dd9a0]">P</span>
        <span className="text-[#39a3ea]">D</span>
        <span className="text-[#b78bf7]">F</span>
      </div>
      <span className="ml-[42px] h-6 w-0.5 bg-[#777777]" />
      <button type="button" className="ml-[46px]">Datei</button>
      <button type="button" className="ml-20">Hilfe</button>
      <div className="ml-[51px] flex h-16 w-[440px] items-center self-end rounded-t-[16px] bg-gradient-to-r from-[#777777] to-[#414141] pl-5 pr-6">
        <svg width="32" height="28" viewBox="0 0 32 28" fill="none" stroke="#c0c0c0" strokeWidth="2" strokeLinecap="round" aria-hidden="true">
          <path d="M6 24Q1 21 2 16Q3 11 7 10Q10 3 17 3Q20 3 22 5M27 11Q30 13 30 18Q29 24 23 25H12M26 3L5 25" />
        </svg>
        <span className="flex-1 text-center">f1040 (1)*</span>
        <button type="button" aria-label="Tab schließen">
          <svg width="24" height="24" viewBox="0 0 24 24" stroke="#d5d5d5" strokeWidth="2" className="block" aria-hidden="true"><path d="M4 4l16 16M20 4L4 20" /></svg>
        </button>
      </div>
      <button type="button" aria-label="Neuer Tab" className="ml-7 mt-3">
        <svg width="24" height="24" viewBox="0 0 24 24" stroke="#d5d5d5" strokeWidth="2" className="block" aria-hidden="true"><path d="M1 12h22M12 1v22" /></svg>
      </button>
      <button type="button" aria-label="1 geöffnetes Fenster" className="ml-auto flex items-center gap-[18px] text-[#d5d5d5]">
        1
        <svg width="20" height="14" viewBox="0 0 20 14" fill="none" stroke="currentColor" strokeWidth="2" aria-hidden="true"><path d="M1 2l9 10 9-10" /></svg>
      </button>
      <button type="button" aria-label="Konto" className="ml-[37px] flex h-[60px] w-[84px] items-center justify-center rounded-lg bg-[#414141]">
        <span className="flex size-11 items-center justify-center rounded-full bg-[#a566ff] text-[28px] text-white">U</span>
      </button>
      <span className="ml-[25px] h-6 w-0.5 bg-[#777777]" />
      <button type="button" aria-label="Minimieren" className="ml-[34px] h-5 w-7"><span className="block h-0.5 w-7 bg-[#d5d5d5]" /></button>
      <button type="button" aria-label="Maximieren" className="ml-12 size-5 rounded-[3px] border-2 border-[#d5d5d5]" />
      <button type="button" aria-label="Schließen" className="ml-[52px] mr-11">
        <svg width="20" height="20" viewBox="0 0 20 20" stroke="#d5d5d5" strokeWidth="2" className="block" aria-hidden="true"><path d="M1 1l18 18M19 1L1 19" /></svg>
      </button>
    </header>
  );
}

export default function App() {
  return (
    <div className="h-screen bg-[#a8a8a8] p-0.5 font-['Noto_Sans','Open_Sans',sans-serif]">
      <div className="flex h-full flex-col overflow-hidden rounded-xl bg-[#363636]">
        <TitleBar />
        <div className="flex min-h-0 flex-1 px-[30px]">
          <LeftRail />
          <Thumbnails />
          <main className="flex min-w-0 flex-1 flex-col bg-[#f7f7f7]">
            <Toolbar />
            <div className="relative flex min-h-0 flex-1">
              <div className="flex-1 bg-white pl-[198px] pt-[293px]">
                <Stamp className="w-[652px]" />
              </div>
              <div className="flex w-5 flex-col items-center justify-end">
                <span className="mb-[118px] h-48 w-3 rounded-full bg-[#aeaeae]" />
              </div>
              <PageBar />
            </div>
            <div className="flex h-5 items-center pl-[100px] pr-[168px] pt-1">
              <span className="h-3 flex-1 rounded-full bg-[#aeaeae]" />
            </div>
          </main>
          <RightRail />
        </div>
      </div>
    </div>
  );
}
